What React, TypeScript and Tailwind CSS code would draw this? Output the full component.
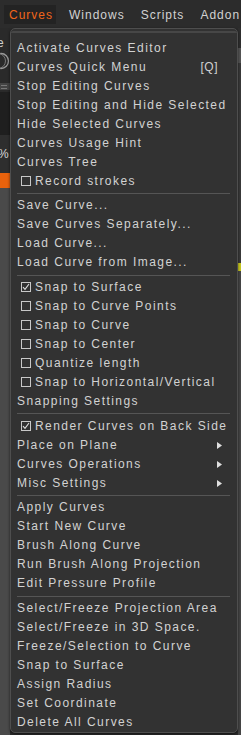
import React from "react";

type Item =
  | { label: string; check?: "on" | "off"; sub?: boolean; hotkey?: string }
  | "sep";

const items: Item[] = [
  { label: "Activate Curves Editor" },
  { label: "Curves Quick Menu", hotkey: "[Q]" },
  { label: "Stop Editing Curves" },
  { label: "Stop Editing and Hide Selected" },
  { label: "Hide Selected Curves" },
  { label: "Curves Usage Hint" },
  { label: "Curves Tree" },
  { label: "Record strokes", check: "off" },
  "sep",
  { label: "Save Curve..." },
  { label: "Save Curves Separately..." },
  { label: "Load Curve..." },
  { label: "Load Curve from Image..." },
  "sep",
  { label: "Snap to Surface", check: "on" },
  { label: "Snap to Curve Points", check: "off" },
  { label: "Snap to Curve", check: "off" },
  { label: "Snap to Center", check: "off" },
  { label: "Quantize length", check: "off" },
  { label: "Snap to Horizontal/Vertical", check: "off" },
  { label: "Snapping Settings" },
  "sep",
  { label: "Render Curves on Back Side", check: "on" },
  { label: "Place on Plane", sub: true },
  { label: "Curves Operations", sub: true },
  { label: "Misc Settings", sub: true },
  "sep",
  { label: "Apply Curves" },
  { label: "Start New Curve" },
  { label: "Brush Along Curve" },
  { label: "Run Brush Along Projection" },
  { label: "Edit Pressure Profile" },
  "sep",
  { label: "Select/Freeze Projection Area" },
  { label: "Select/Freeze in 3D Space." },
  { label: "Freeze/Selection to Curve" },
  { label: "Snap to Surface" },
  { label: "Assign Radius" },
  { label: "Set Coordinate" },
  { label: "Delete All Curves" },
];

function Check({ on }: { on: boolean }) {
  return (
    <span className="ml-[4px] mr-[4px] flex h-[10px] w-[10px] shrink-0 items-center justify-center border border-[#c8c8c8]">
      {on && (
        <svg width="8" height="8" viewBox="0 0 8 8">
          <polyline points="1,4.2 3,6.3 7,1" fill="none" stroke="#e0e0e0" strokeWidth="1.1" />
        </svg>
      )}
    </span>
  );
}

export default function App() {
  return (
    <div
      className="relative h-[735px] w-[241px] overflow-hidden bg-[#2b2b2b] text-[12px] text-[#d2d2d2]"
      style={{ fontFamily: '"Liberation Sans", Arial, sans-serif' }}
    >
      {/* menu bar */}
      <div className="flex h-[28px] items-start bg-[#2c2c2c] pt-[5px] text-[12px] tracking-[1px]">
        <div className="ml-[4px] flex h-[19px] w-[52px] items-center bg-[#232323] pl-[5px] text-[#f0651a]">
          Curves
        </div>
        <div className="ml-[13px] flex h-[19px] items-center">Windows</div>
        <div className="ml-[16px] flex h-[19px] items-center">Scripts</div>
        <div className="ml-[16px] flex h-[19px] items-center whitespace-nowrap">Addon</div>
      </div>

      {/* background app content */}
      <div className="flex h-[707px]">
        <div className="flex w-[10px] flex-col bg-[#2a2a2a]">
          <div className="h-[8px]" />
          <div className="ml-[-3px] h-[14px] text-[12px] leading-[14px] text-[#cfcfcf]">e</div>
          <div className="h-[2px]" />
          <svg width="10" height="18" viewBox="0 0 10 18">
            <circle cx="1" cy="9" r="7.5" fill="none" stroke="#9a9a9a" strokeWidth="1.3" />
            <circle cx="-2" cy="9" r="7.5" fill="none" stroke="#777" strokeWidth="1" />
          </svg>
          <div className="h-[13px]" />
          <div className="flex h-[7px] flex-col justify-center gap-[2px] bg-[#444] pl-[1px]">
            <div className="h-[1px] w-[6px] bg-[#777]" />
            <div className="h-[1px] w-[6px] bg-[#777]" />
          </div>
          <div className="h-[2px]" />
          <div className="h-[43px] bg-[#1f1f1f]" />
          <div className="flex h-[38px] items-center bg-[#2e2e2e] text-[12px] text-[#d8d8d8]">
            <span className="ml-[-2px]">%</span>
          </div>
          <div className="h-[15px] bg-[#e8620c]" />
          <div className="flex-1 bg-[#4a4a4a]" />
        </div>
        <div className="flex-1" />
        <div className="flex w-[3px] flex-col bg-[#2f2f2f]">
          <div className="h-[20px]" />
          <div className="h-[15px] bg-[#555]" />
          <div className="h-[200px] bg-[#3a3a3a]" />
          <div className="h-[8px] bg-[#c8c820]" />
          <div className="flex-1 bg-[#454545]" />
        </div>
      </div>

      {/* dropdown menu */}
      <div className="absolute left-[10px] top-[28px] flex h-[705px] w-[228px] flex-col rounded-[5px] border border-[#4e4e4e] bg-[#323232] px-[6px] tracking-[1.45px] shadow-[0_1px_3px_rgba(0,0,0,0.6)]">
        <div className="mx-[-6px] mt-[2px] h-[2px] rounded-t-[4px] bg-[#474747]" />
        <div className="h-[6px]" />
        {items.map((it, i) =>
          it === "sep" ? (
            <div key={i} className="flex h-[6px] items-center">
              <div className="h-[1px] w-[213px] bg-[#555555]" />
            </div>
          ) : (
            <div key={i} className="flex h-[19px] items-center whitespace-nowrap leading-[19px]">
              {it.check && <Check on={it.check === "on"} />}
              <span>{it.label}</span>
              {it.hotkey && <span className="ml-auto mr-[13px] tracking-[0.5px]">{it.hotkey}</span>}
              {it.sub && (
                <svg className="ml-auto mr-[9px]" width="5" height="7" viewBox="0 0 5 7">
                  <polygon points="0,0 5,3.5 0,7" fill="#e0e0e0" />
                </svg>
              )}
            </div>
          )
        )}
      </div>
    </div>
  );
}
